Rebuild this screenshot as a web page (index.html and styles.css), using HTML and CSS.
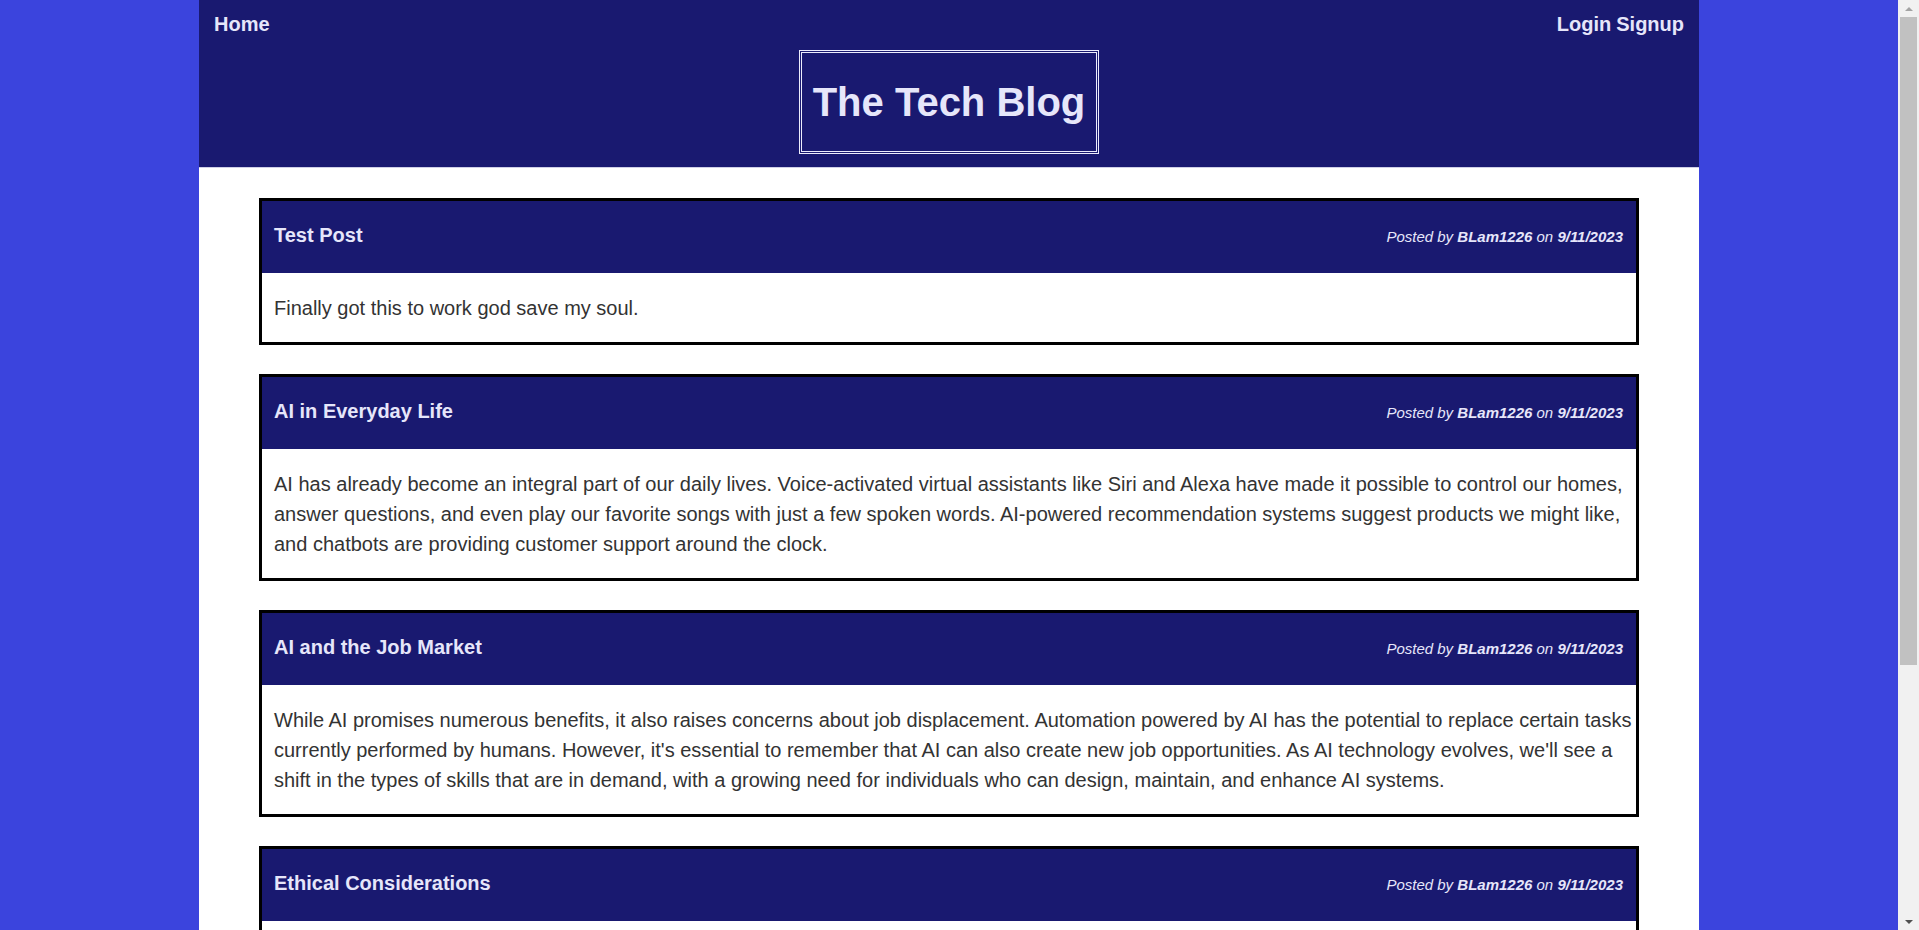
FILE: index.html
```html
<!DOCTYPE html>
<html lang="en">
<head>
<meta charset="utf-8">
<title>The Tech Blog</title>
<link rel="stylesheet" href="styles.css">
</head>
<body>
<div class="page">
  <header class="site-header">
    <nav class="nav">
      <a class="nav-link" href="#">Home</a>
      <div class="nav-right">
        <a class="nav-link" href="#">Login</a>
        <a class="nav-link" href="#">Signup</a>
      </div>
    </nav>
    <div class="brand-wrap">
      <h1 class="brand">The Tech Blog</h1>
    </div>
  </header>
  <main class="posts">
    <article class="post">
      <div class="post-head">
        <h2 class="post-title">Test Post</h2>
        <p class="post-meta">Posted by <b>BLam1226</b> on <b>9/11/2023</b></p>
      </div>
      <div class="post-body">
        <p>Finally got this to work god save my soul.</p>
      </div>
    </article>
    <article class="post">
      <div class="post-head">
        <h2 class="post-title">AI in Everyday Life</h2>
        <p class="post-meta">Posted by <b>BLam1226</b> on <b>9/11/2023</b></p>
      </div>
      <div class="post-body">
        <p>AI has already become an integral part of our daily lives. Voice-activated virtual assistants like Siri and Alexa have made it possible to control our homes, answer questions, and even play our favorite songs with just a few spoken words. AI-powered recommendation systems suggest products we might like, and chatbots are providing customer support around the clock.</p>
      </div>
    </article>
    <article class="post">
      <div class="post-head">
        <h2 class="post-title">AI and the Job Market</h2>
        <p class="post-meta">Posted by <b>BLam1226</b> on <b>9/11/2023</b></p>
      </div>
      <div class="post-body">
        <p>While AI promises numerous benefits, it also raises concerns about job displacement. Automation powered by AI has the potential to replace certain tasks currently performed by humans. However, it's essential to remember that AI can also create new job opportunities. As AI technology evolves, we'll see a shift in the types of skills that are in demand, with a growing need for individuals who can design, maintain, and enhance AI systems.</p>
      </div>
    </article>
    <article class="post">
      <div class="post-head">
        <h2 class="post-title">Ethical Considerations</h2>
        <p class="post-meta">Posted by <b>BLam1226</b> on <b>9/11/2023</b></p>
      </div>
      <div class="post-body">
        <p>As AI becomes more powerful, ethical considerations become increasingly important. Issues such as bias in AI algorithms, data privacy, and the potential for AI to be used for malicious purposes need to be addressed. Responsible development and regulation of AI technologies are essential to ensure that the benefits outweigh the risks.</p>
      </div>
    </article>
  </main>
</div>
<div class="scrollbar" aria-hidden="true">
  <span class="sb-arrow sb-up"></span>
  <span class="sb-track"><span class="sb-thumb"></span></span>
  <span class="sb-arrow sb-down"></span>
</div>
</body>
</html>
```
FILE: styles.css
```css
html {
  background: #3b44dd;
}

body {
  margin: 0;
  padding-right: 21px;
  background: #3b44dd;
  font-family: "Liberation Sans", Arial, sans-serif;
  color: #333333;
}

.page {
  width: 1500px;
  margin: 0 auto;
  background: #ffffff;
}

.site-header {
  background: #191970;
  padding: 13px 15px 13px;
  border-bottom: 1px solid #cfcfe6;
}

.nav {
  display: flex;
  justify-content: space-between;
  align-items: baseline;
}

.nav-right {
  display: flex;
  gap: 5px;
}

.nav-link {
  color: #e6e6fa;
  font-size: 20px;
  font-weight: bold;
  text-decoration: none;
  line-height: 23px;
}

.brand-wrap {
  display: flex;
  justify-content: center;
  margin-top: 14px;
}

.brand {
  margin: 0;
  padding: 26px 11px;
  border: 3px double #ececfc;
  color: #e6e6fa;
  font-size: 40px;
  line-height: 46px;
  font-weight: bold;
}

.posts {
  padding: 30px 60px 1px;
}

.post {
  border: 3px solid #000000;
  margin-bottom: 29px;
  background: #ffffff;
}

.post-head {
  display: flex;
  justify-content: space-between;
  align-items: baseline;
  background: #191970;
  color: #e6e6fa;
  padding: 23px 13px 26px 12px;
}

.post-title {
  margin: 0;
  font-size: 20px;
  line-height: 23px;
  font-weight: bold;
}

.post-meta {
  margin: 0;
  font-size: 15px;
  font-style: italic;
}

.post-body {
  padding: 20px 0 19px 12px;
}

.post-body p {
  margin: 0;
  font-size: 20px;
  line-height: 30px;
  color: #333333;
}

/* emulated classic scrollbar */
.scrollbar {
  position: fixed;
  top: 0;
  right: 0;
  width: 21px;
  height: 100vh;
  background: #f1f1f1;
  display: flex;
  flex-direction: column;
}

.sb-arrow {
  height: 17px;
  flex: none;
  display: flex;
  justify-content: center;
  align-items: center;
}

.sb-arrow::before {
  content: "";
  width: 0;
  height: 0;
  border-left: 4px solid transparent;
  border-right: 4px solid transparent;
}

.sb-up::before {
  border-bottom: 4px solid #a3a3a3;
}

.sb-down::before {
  border-top: 4px solid #505050;
}

.sb-track {
  flex: 1;
  padding: 0 2px;
}

.sb-thumb {
  display: block;
  height: 648px;
  background: #c1c1c1;
}
```
